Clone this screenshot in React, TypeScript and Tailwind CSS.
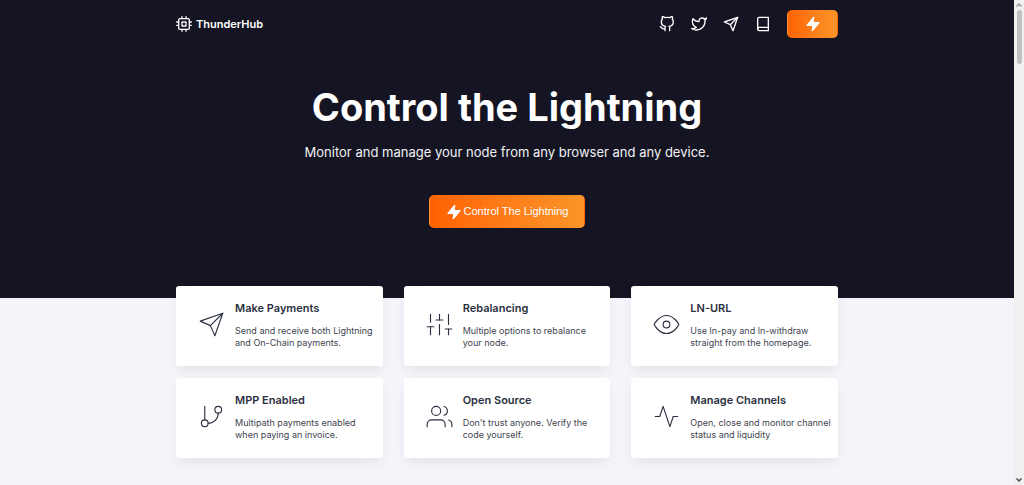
import type { ComponentType, SVGProps } from 'react';
import {
  FiActivity,
  FiBook,
  FiCpu,
  FiEye,
  FiGitBranch,
  FiGithub,
  FiSend,
  FiSliders,
  FiTwitter,
  FiUsers,
} from 'react-icons/fi';

type Icon = ComponentType<SVGProps<SVGSVGElement> & { size?: number | string }>;

const links: { label: string; icon: Icon }[] = [
  { label: 'GitHub', icon: FiGithub },
  { label: 'Twitter', icon: FiTwitter },
  { label: 'Telegram', icon: FiSend },
  { label: 'Documentation', icon: FiBook },
];

const features: { title: string; text: string; icon: Icon }[] = [
  { title: 'Make Payments', text: 'Send and receive both Lightning and On-Chain payments.', icon: FiSend },
  { title: 'Rebalancing', text: 'Multiple options to rebalance your node.', icon: FiSliders },
  { title: 'LN-URL', text: 'Use ln-pay and ln-withdraw straight from the homepage.', icon: FiEye },
  { title: 'MPP Enabled', text: 'Multipath payments enabled when paying an invoice.', icon: FiGitBranch },
  { title: 'Open Source', text: "Don't trust anyone. Verify the code yourself.", icon: FiUsers },
  { title: 'Manage Channels', text: 'Open, close and monitor channel status and liquidity', icon: FiActivity },
];

function Bolt() {
  return (
    <svg viewBox="0 0 24 24" className="size-4 shrink-0" fill="currentColor" stroke="currentColor" strokeWidth="2" strokeLinejoin="round" aria-hidden="true">
      <polygon points="13 2 3 14 12 14 11 22 21 10 12 10 13 2" />
    </svg>
  );
}

function Header() {
  return (
    <header className="flex h-12 items-center justify-between">
      <a href="#home" className="flex items-center gap-1 text-[11px] font-semibold">
        <FiCpu size={16} />
        ThunderHub
      </a>
      <nav className="flex items-center gap-4">
        {links.map(({ label, icon: LinkIcon }) => (
          <a key={label} href={`#${label.toLowerCase()}`} aria-label={label}>
            <LinkIcon size={16} />
          </a>
        ))}
        <button
          type="button"
          aria-label="Open app"
          className="flex h-7 w-[51px] items-center justify-center rounded-[5px] border border-transparent bg-linear-to-r from-[#ff6200] to-[#fa9428]"
        >
          <Bolt />
        </button>
      </nav>
    </header>
  );
}

function Scrollbar() {
  return (
    <div className="sticky top-0 flex h-screen w-[10px] shrink-0 flex-col items-center justify-between bg-[#f0f0f0] py-[3px]" aria-hidden="true">
      <div className="flex flex-col items-center gap-[3px]">
        <svg viewBox="0 0 6 4" className="h-1 w-1.5" fill="none" stroke="#a3a3a3" strokeWidth="1.5">
          <path d="M.5 3.5 3 1l2.5 2.5" />
        </svg>
        <div className="h-[54px] w-[5px] rounded-sm bg-[#c1c1c1]" />
      </div>
      <svg viewBox="0 0 6 4" className="h-1 w-1.5" fill="none" stroke="#505050" strokeWidth="1.5">
        <path d="M.5.5 3 3 5.5.5" />
      </svg>
    </div>
  );
}

export default function App() {
  return (
    <div className="flex min-h-screen bg-[#f4f5fa] font-['Inter','Liberation_Sans',sans-serif]">
      <main className="min-w-0 flex-1">
        <section className="bg-[#141423] pb-[70px] text-white">
          <div className="mx-auto max-w-[662px]">
            <Header />
            <div className="flex flex-col items-center pt-8 text-center">
              <h1 className="text-[38px] leading-[54px] font-bold">Control the Lightning</h1>
              <p className="pt-1.5 text-[13px] leading-6 text-[#f2f2f5]">
                Monitor and manage your node from any browser and any device.
              </p>
              <button
                type="button"
                className="mt-[31px] flex h-[33px] items-center gap-0.5 rounded-[5px] border border-transparent bg-linear-to-r from-[#ff6200] to-[#fa9428] px-4 font-['Liberation_Sans',sans-serif] text-[11px]"
              >
                <Bolt />
                Control The Lightning
              </button>
            </div>
          </div>
        </section>
        <section className="mx-auto -mt-3 grid max-w-[662px] grid-cols-3 gap-x-[21px] gap-y-3">
          {features.map(({ title, text, icon: FeatureIcon }) => (
            <article
              key={title}
              className="flex h-20 items-center rounded-[3px] bg-white pr-1 pb-[3px] text-[#2b3040] shadow-[0_6px_12px_-3px_rgba(20,20,50,0.09)]"
            >
              <div className="flex w-[59px] shrink-0 justify-end pr-[10px]">
                <FeatureIcon size={27} strokeWidth={1} />
              </div>
              <div className="flex-1">
                <h2 className="pb-[9px] text-[11px] leading-4 font-semibold">{title}</h2>
                <p className="text-[9px] leading-3 text-[#40444f]">{text}</p>
              </div>
            </article>
          ))}
        </section>
      </main>
      <Scrollbar />
    </div>
  );
}
